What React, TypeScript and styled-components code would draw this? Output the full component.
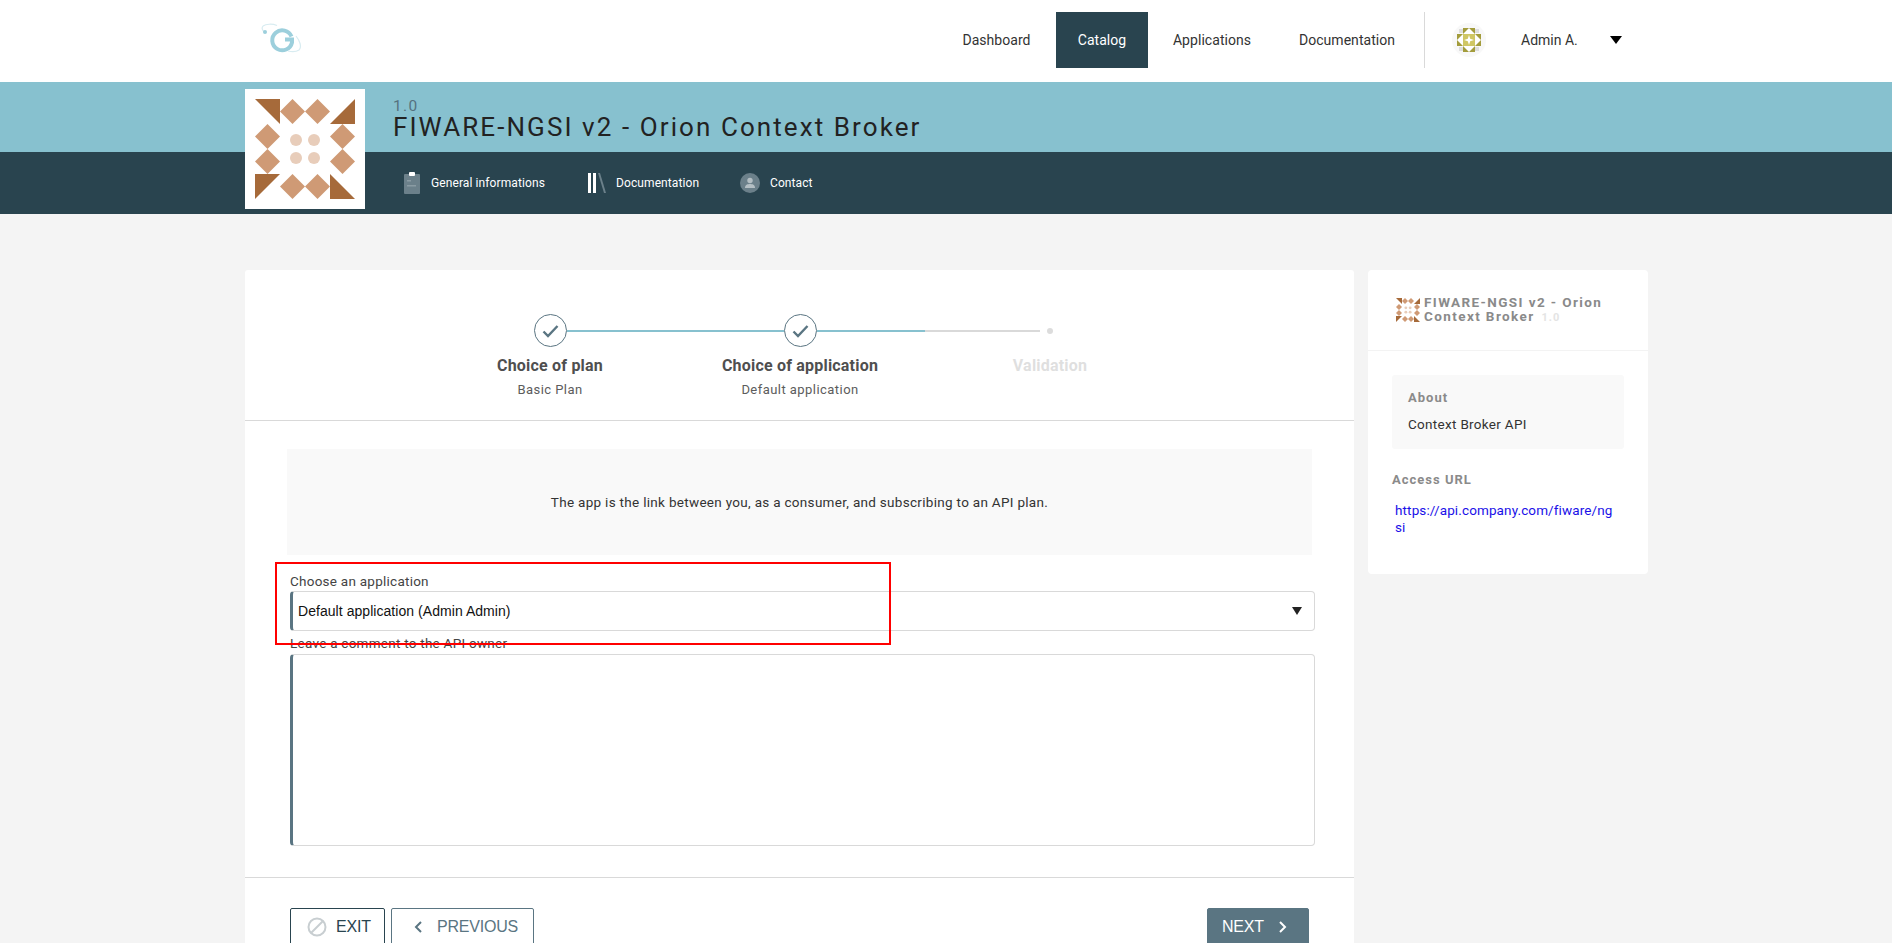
import React from "react";
import styled, { createGlobalStyle } from "styled-components";

const DARK = "#29444f";
const TEAL = "#87c1cf";
const SLATE = "#5a7582";
const LINE = "#d9d9d9";
const FONT = `Roboto, "Liberation Sans", sans-serif`;
const ARIAL = `"Liberation Sans", Arial, sans-serif`;

const GlobalStyle = createGlobalStyle`
  html, body {
    margin: 0;
    height: 100%;
    overflow: hidden;
    background: #f4f4f4;
    font-family: ${FONT};
  }
  * { box-sizing: border-box; }
`;

const Page = styled.div`
  height: 943px;
  overflow: hidden;
`;

const Container = styled.div`
  width: 1403px;
  margin-left: 245px;
`;

/* top bar */
const TopBar = styled.header`
  height: 82px;
  background: #fff;
`;
const TopRow = styled(Container)`
  display: flex;
  align-items: flex-start;
  padding-top: 12px;
`;
const Brand = styled.div`
  margin: 11px 0 0 16px;
  width: 46px;
  height: 32px;
`;
const Nav = styled.nav`
  display: flex;
  margin-left: auto;
  height: 56px;
  margin-right: 6px;
`;
const NavItem = styled.a<{ $active?: boolean; $w: number }>`
  width: ${({ $w }) => $w}px;
  display: flex;
  align-items: center;
  justify-content: center;
  font-size: 14px;
  letter-spacing: 0.05px;
  color: ${({ $active }) => ($active ? "#fff" : "#333")};
  background: ${({ $active }) => ($active ? DARK : "transparent")};
`;
const UserBox = styled.div`
  display: flex;
  align-items: center;
  height: 56px;
  width: 224px;
  border-left: 1px solid ${LINE};
  padding-left: 27px;
  font-size: 14px;
  color: #333;
`;
const UserName = styled.span`
  margin-left: 35px;
  width: 89px;
`;

/* product hero */
const Hero = styled.section`
  position: relative;
`;
const TitleBand = styled.div`
  height: 70px;
  background: ${TEAL};
`;
const TitleBlock = styled(Container)`
  padding: 17px 0 0 148px;
`;
const Version = styled.div`
  font-size: 15.5px;
  line-height: 15px;
  letter-spacing: 1.3px;
  color: #55727f;
`;
const Title = styled.h1`
  margin: 0;
  font-size: 26px;
  line-height: 26px;
  font-weight: 400;
  letter-spacing: 2.08px;
  color: #222;
`;
const TabBand = styled.div`
  height: 62px;
  background: ${DARK};
`;
const Tabs = styled(Container)`
  display: flex;
  align-items: center;
  height: 62px;
  padding-left: 159px;
`;
const Tab = styled.a<{ $w: number }>`
  display: flex;
  align-items: center;
  width: ${({ $w }) => $w}px;
  font-size: 12px;
  letter-spacing: 0.1px;
  color: #fff;
  svg {
    flex: none;
    margin-right: 10px;
  }
`;
const LogoCard = styled.div`
  position: absolute;
  top: 7px;
  left: 245px;
  width: 120px;
  height: 120px;
  padding: 10px;
  background: #fff;
`;

/* content */
const Main = styled(Container)`
  display: flex;
  align-items: flex-start;
  gap: 14px;
  padding-top: 56px;
`;
const Card = styled.main`
  width: 1109px;
  flex: none;
  background: #fff;
  border-radius: 3px 3px 0 0;
`;
const StepperSection = styled.div`
  height: 151px;
  padding: 44px 0 0 180px;
  border-bottom: 1px solid ${LINE};
`;
const Stepper = styled.ol`
  display: flex;
  width: 750px;
  margin: 0;
  padding: 0;
  list-style: none;
`;
const Step = styled.li<{ $done?: boolean }>`
  width: 250px;
  display: flex;
  flex-direction: column;
  align-items: center;
  color: ${({ $done }) => ($done ? "#4f4f4f" : "#dfdfdf")};
`;
const StepTrack = styled.div`
  display: flex;
  align-items: center;
  justify-content: center;
  height: 33px;
  width: 100%;
`;
const StepLine = styled.span<{ $color: string; $flex: number }>`
  flex: ${({ $flex }) => $flex};
  height: 2px;
  background: ${({ $color }) => $color};
`;
const StepGap = styled.span`
  flex: 1;
`;
const StepCircle = styled.span`
  flex: none;
  width: 33px;
  height: 33px;
  border-radius: 50%;
  border: 1px solid ${SLATE};
  display: flex;
  align-items: center;
  justify-content: center;
`;
const StepDotWrap = styled.span`
  flex: none;
  width: 20px;
  display: flex;
  justify-content: center;
`;
const StepDot = styled.span`
  width: 6px;
  height: 6px;
  border-radius: 50%;
  background: #dcdcdc;
`;
const StepName = styled.div`
  margin-top: 9px;
  font-size: 16px;
  line-height: 20px;
  font-weight: 700;
  letter-spacing: 0.2px;
`;
const StepValue = styled.div`
  margin-top: 5px;
  font-size: 13px;
  line-height: 18px;
  letter-spacing: 0.45px;
  color: #5c5c5c;
`;

const FormArea = styled.div`
  position: relative;
  height: 456px;
  padding: 28px 0 0 42px;
`;
const InfoBox = styled.div`
  width: 1025px;
  height: 106px;
  display: flex;
  align-items: center;
  justify-content: center;
  background: #f9f9f9;
  font-size: 13.5px;
  letter-spacing: 0.3px;
  color: #333;
`;
const Field = styled.div`
  margin-left: 3px;
`;
const FieldLabel = styled.label<{ $top: number }>`
  display: block;
  margin-top: ${({ $top }) => $top}px;
  height: 18px;
  font-size: 13.5px;
  line-height: 16px;
  letter-spacing: 0.25px;
  color: #444;
`;
const SelectBox = styled.div`
  display: flex;
  align-items: center;
  justify-content: space-between;
  width: 1025px;
  height: 40px;
  padding: 0 12px 0 5px;
  background: #fff;
  border: 1px solid ${LINE};
  border-left: 3px solid ${SLATE};
  border-radius: 4px;
  font-family: ${ARIAL};
  font-size: 14px;
  letter-spacing: 0.05px;
  color: #111;
`;
const Comment = styled.textarea`
  display: block;
  width: 1025px;
  height: 192px;
  margin-top: 1px;
  resize: none;
  outline: none;
  background: #fff;
  border: 1px solid ${LINE};
  border-left: 3px solid ${SLATE};
  border-radius: 4px;
`;
const Highlight = styled.div`
  position: absolute;
  top: 141px;
  left: 30px;
  width: 616px;
  height: 83px;
  border: 2px solid #f00;
  pointer-events: none;
`;

const Footer = styled.div`
  display: flex;
  align-items: flex-start;
  gap: 6px;
  padding: 30px 45px 0;
  border-top: 1px solid ${LINE};
`;
const Button = styled.button<{ $variant: "exit" | "previous" | "next"; $w: number }>`
  display: flex;
  align-items: center;
  width: ${({ $w }) => $w}px;
  height: 38px;
  padding: 0;
  border-radius: 2px;
  font-family: ${ARIAL};
  font-size: 16px;
  letter-spacing: -0.2px;
  background: ${({ $variant }) => ($variant === "next" ? SLATE : "#fff")};
  color: ${({ $variant }) =>
    $variant === "exit" ? DARK : $variant === "next" ? "#fff" : SLATE};
  border: 1px solid ${({ $variant }) => ($variant === "exit" ? DARK : SLATE)};
  margin-left: ${({ $variant }) => ($variant === "next" ? "auto" : "0")};
`;
const ButtonIcon = styled.svg<{ $before: number; $after: number }>`
  flex: none;
  margin: 0 ${({ $after }) => $after}px 0 ${({ $before }) => $before}px;
`;
const ButtonText = styled.span<{ $before?: number }>`
  margin-left: ${({ $before }) => $before ?? 0}px;
`;

/* sidebar */
const Side = styled.aside`
  width: 280px;
  flex: none;
  height: 304px;
  background: #fff;
  border-radius: 4px;
`;
const SideHead = styled.div`
  display: flex;
  align-items: center;
  gap: 4px;
  height: 81px;
  padding: 0 20px 0 28px;
  border-bottom: 1px solid #f3f3f3;
`;
const SideTitle = styled.div`
  font-size: 13.5px;
  line-height: 14px;
  font-weight: 700;
  letter-spacing: 1.4px;
  color: #8a8a8a;
`;
const SideTitleLine = styled.div`
  display: flex;
  align-items: baseline;
  white-space: nowrap;
`;
const SideVersion = styled.span`
  margin-left: 7px;
  font-size: 11px;
  letter-spacing: 1px;
  color: #e4e4e4;
`;
const SideBody = styled.div`
  padding: 24px 24px 0;
`;
const AboutBox = styled.div`
  height: 74px;
  padding: 15px 16px 0;
  background: #f9f9f9;
  border-radius: 3px;
`;
const SideHeading = styled.div`
  font-size: 13px;
  line-height: 16px;
  font-weight: 700;
  letter-spacing: 1px;
  color: #8a8a8a;
`;
const AboutText = styled.div`
  margin-top: 10px;
  font-size: 13.5px;
  line-height: 16px;
  letter-spacing: 0.3px;
  color: #333;
`;
const AccessHeading = styled(SideHeading)`
  margin-top: 23px;
`;
const AccessLink = styled.a`
  display: block;
  margin: 14px 0 0 3px;
  width: 224px;
  font-size: 13.5px;
  line-height: 17px;
  letter-spacing: 0.12px;
  word-break: break-all;
  color: #1a10e8;
`;

const BROWN = "#a66a3a";
const TAN = "#cf9a75";

const diamonds = [
  [37.5, 12.5], [62.5, 12.5],
  [12.5, 37.5], [87.5, 37.5],
  [12.5, 62.5], [87.5, 62.5],
  [37.5, 87.5], [62.5, 87.5],
];
const dots = [[41, 41], [59, 41], [41, 59], [59, 59]];

const Identicon = ({ size }: { size: number }) => (
  <svg width={size} height={size} viewBox="0 0 100 100" style={{ flex: "none", display: "block" }}>
    <polygon fill={BROWN} points="0,0 25,0 25,25" />
    <polygon fill={BROWN} points="75,25 100,0 100,25" />
    <polygon fill={BROWN} points="0,75 25,75 0,100" />
    <polygon fill={BROWN} points="75,75 100,100 75,100" />
    {diamonds.map(([x, y]) => (
      <polygon
        key={`${x}-${y}`}
        fill={TAN}
        points={`${x},${y - 12.5} ${x + 12.5},${y} ${x},${y + 12.5} ${x - 12.5},${y}`}
      />
    ))}
    {dots.map(([x, y]) => (
      <circle key={`${x}-${y}`} cx={x} cy={y} r="6" fill="#e8cdba" />
    ))}
  </svg>
);

const BrandLogo = () => (
  <svg width="46" height="32" viewBox="0 0 46 32" fill="none">
    <path
      d="M30.5 13.5 A10 10 0 1 0 31 19.5 L31 16.5 L24 16.5"
      stroke="#9ccfdc"
      strokeWidth="4"
    />
    <path d="M16 2.5 C11 0.5 5 1 2 3" stroke="#d8ecf1" strokeWidth="1.2" />
    <path d="M2 3 C0.5 5 1 7 3 9" stroke="#d8ecf1" strokeWidth="1.2" />
    <circle cx="4" cy="9" r="2" fill="#9ccfdc" />
    <path d="M35 13 C39 18 41 24 38 27 C35 29 31 29 27 28" stroke="#d8ecf1" strokeWidth="1.2" />
  </svg>
);

const AdminAvatar = () => (
  <svg width="34" height="34" viewBox="0 0 34 34" style={{ flex: "none" }}>
    <circle cx="17" cy="17" r="17" fill="#f8f8f8" />
    <rect x="7" y="6" width="4" height="4" fill="#dedede" />
    <rect x="23" y="6" width="4" height="4" fill="#dedede" />
    <rect x="7" y="24" width="4" height="4" fill="#dedede" />
    <rect x="23" y="24" width="4" height="4" fill="#dedede" />
    <rect x="11" y="5" width="12" height="6" fill="#a39c3c" />
    <rect x="11" y="23" width="12" height="6" fill="#a39c3c" />
    <rect x="5" y="11" width="6" height="12" fill="#a39c3c" />
    <rect x="23" y="11" width="6" height="12" fill="#a39c3c" />
    <polygon fill="#fff" points="17,5 23,11 11,11" />
    <polygon fill="#fff" points="17,29 23,23 11,23" />
    <polygon fill="#fff" points="5,17 11,11 11,23" />
    <polygon fill="#fff" points="29,17 23,11 23,23" />
    <rect x="11" y="11" width="12" height="12" fill="#cfc664" />
    <polygon fill="#fff" points="17,12 18.2,15.8 22,17 18.2,18.2 17,22 15.8,18.2 12,17 15.8,15.8" />
  </svg>
);

const Caret = ({ color = "#000", w = 12, h = 8 }: { color?: string; w?: number; h?: number }) => (
  <svg width={w} height={h} viewBox="0 0 11 8" style={{ flex: "none" }} preserveAspectRatio="none">
    <polygon points="0,0 11,0 5.5,8" fill={color} />
  </svg>
);

const ClipboardIcon = () => (
  <svg width="17" height="22" viewBox="0 0 17 22">
    <rect x="0" y="2" width="16" height="20" rx="1" fill="#6b808a" />
    <rect x="5" y="0" width="6" height="4" rx="1" fill="#fff" />
    <rect x="3" y="8" width="4" height="1.5" fill="#8a9ba3" />
    <rect x="3" y="13" width="9" height="1.5" fill="#8a9ba3" />
  </svg>
);

const BooksIcon = () => (
  <svg width="18" height="20" viewBox="0 0 18 20">
    <rect x="0" y="0" width="3" height="20" fill="#fff" />
    <rect x="5" y="0" width="3" height="20" fill="#fff" />
    <polygon points="10,0 12,0 18,20 16,20" fill="#6b808a" />
  </svg>
);

const PersonIcon = () => (
  <svg width="20" height="20" viewBox="0 0 20 20">
    <circle cx="10" cy="10" r="10" fill="#6b808a" />
    <circle cx="10" cy="7.5" r="2.7" fill="#b4bfc4" />
    <path d="M5 15 C5 11.5 7.5 11 10 11 C12.5 11 15 11.5 15 15 Z" fill="#b4bfc4" />
  </svg>
);

const CheckIcon = () => (
  <svg width="17" height="14" viewBox="0 0 17 14" fill="none">
    <path d="M1.5 7.5 L6 12 L15.5 2" stroke={SLATE} strokeWidth="2.4" />
  </svg>
);

const navItems = [
  { label: "Dashboard", w: 119 },
  { label: "Catalog", w: 92, active: true },
  { label: "Applications", w: 128 },
  { label: "Documentation", w: 142 },
];

const App = () => (
  <Page>
    <GlobalStyle />
    <TopBar>
      <TopRow>
        <Brand>
          <BrandLogo />
        </Brand>
        <Nav>
          {navItems.map((item) => (
            <NavItem key={item.label} $w={item.w} $active={item.active}>
              {item.label}
            </NavItem>
          ))}
        </Nav>
        <UserBox>
          <AdminAvatar />
          <UserName>Admin A.</UserName>
          <Caret />
        </UserBox>
      </TopRow>
    </TopBar>

    <Hero>
      <TitleBand>
        <TitleBlock>
          <Version>1.0</Version>
          <Title>FIWARE-NGSI v2 - Orion Context Broker</Title>
        </TitleBlock>
      </TitleBand>
      <TabBand>
        <Tabs>
          <Tab $w={184}>
            <ClipboardIcon />
            General informations
          </Tab>
          <Tab $w={152}>
            <BooksIcon />
            Documentation
          </Tab>
          <Tab $w={100}>
            <PersonIcon />
            Contact
          </Tab>
        </Tabs>
      </TabBand>
      <LogoCard>
        <Identicon size={100} />
      </LogoCard>
    </Hero>

    <Main>
      <Card>
        <StepperSection>
          <Stepper>
            <Step $done>
              <StepTrack>
                <StepGap />
                <StepCircle>
                  <CheckIcon />
                </StepCircle>
                <StepLine $color={TEAL} $flex={1} />
              </StepTrack>
              <StepName>Choice of plan</StepName>
              <StepValue>Basic Plan</StepValue>
            </Step>
            <Step $done>
              <StepTrack>
                <StepLine $color={TEAL} $flex={1} />
                <StepCircle>
                  <CheckIcon />
                </StepCircle>
                <StepLine $color={TEAL} $flex={1} />
              </StepTrack>
              <StepName>Choice of application</StepName>
              <StepValue>Default application</StepValue>
            </Step>
            <Step>
              <StepTrack>
                <StepLine $color={LINE} $flex={1} />
                <StepDotWrap>
                  <StepDot />
                </StepDotWrap>
                <StepGap />
              </StepTrack>
              <StepName>Validation</StepName>
            </Step>
          </Stepper>
        </StepperSection>

        <FormArea>
          <InfoBox>The app is the link between you, as a consumer, and subscribing to an API plan.</InfoBox>
          <Field>
            <FieldLabel $top={18}>Choose an application</FieldLabel>
            <SelectBox>
              Default application (Admin Admin)
              <Caret color="#222" w={10} />
            </SelectBox>
          </Field>
          <Field>
            <FieldLabel $top={4}>Leave a comment to the API owner</FieldLabel>
            <Comment />
          </Field>
          <Highlight />
        </FormArea>

        <Footer>
          <Button $variant="exit" $w={95}>
            <ButtonIcon $before={16} $after={9} width="20" height="20" viewBox="0 0 20 20" fill="none">
              <circle cx="10" cy="10" r="8.5" stroke="#c8ced1" strokeWidth="2" />
              <path d="M4 16 L16 4" stroke="#c8ced1" strokeWidth="2" />
            </ButtonIcon>
            <ButtonText>EXIT</ButtonText>
          </Button>
          <Button $variant="previous" $w={143}>
            <ButtonIcon $before={22} $after={15} width="8" height="12" viewBox="0 0 8 12" fill="none">
              <path d="M7 1 L2 6 L7 11" stroke={SLATE} strokeWidth="2" />
            </ButtonIcon>
            <ButtonText>PREVIOUS</ButtonText>
          </Button>
          <Button $variant="next" $w={102}>
            <ButtonText $before={14}>NEXT</ButtonText>
            <ButtonIcon $before={15} $after={0} width="8" height="12" viewBox="0 0 8 12" fill="none">
              <path d="M1 1 L6 6 L1 11" stroke="#fff" strokeWidth="2" />
            </ButtonIcon>
          </Button>
        </Footer>
      </Card>

      <Side>
        <SideHead>
          <Identicon size={24} />
          <SideTitle>
            <SideTitleLine>FIWARE-NGSI v2 - Orion</SideTitleLine>
            <SideTitleLine>
              <span>Context Broker</span>
              <SideVersion>1.0</SideVersion>
            </SideTitleLine>
          </SideTitle>
        </SideHead>
        <SideBody>
          <AboutBox>
            <SideHeading>About</SideHeading>
            <AboutText>Context Broker API</AboutText>
          </AboutBox>
          <AccessHeading>Access URL</AccessHeading>
          <AccessLink>https://api.company.com/fiware/ngsi</AccessLink>
        </SideBody>
      </Side>
    </Main>
  </Page>
);

export default App;
